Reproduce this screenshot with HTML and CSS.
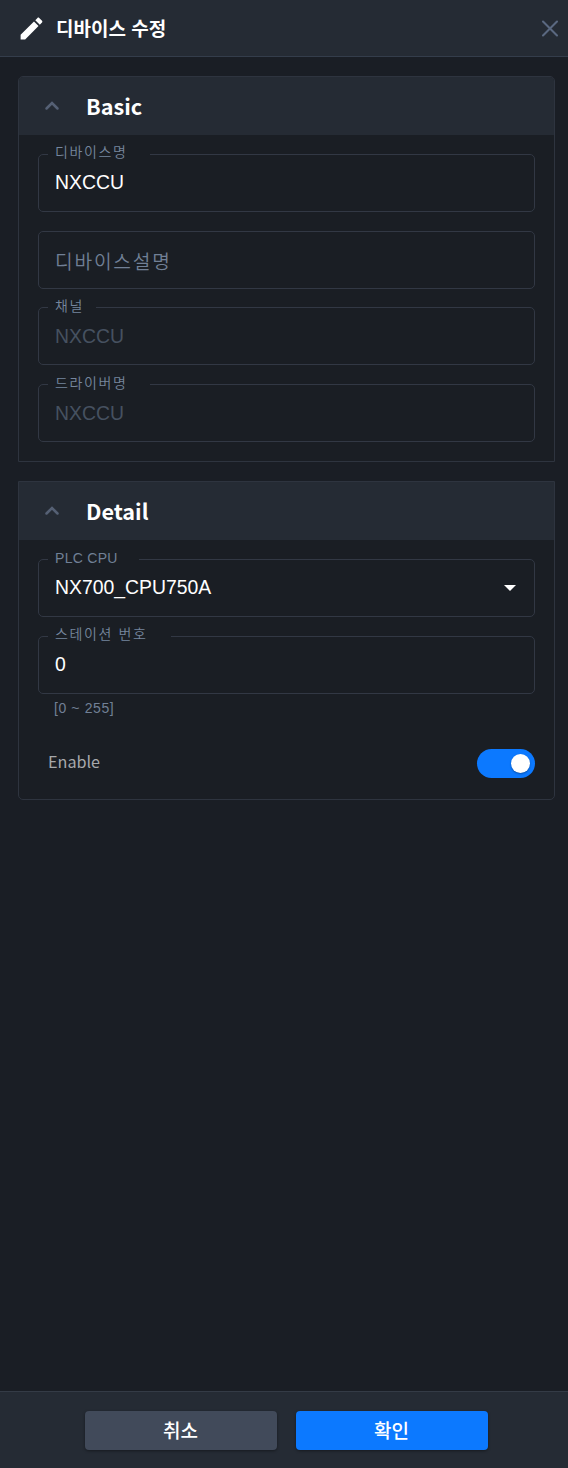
FILE: index.html
```html
<!DOCTYPE html>
<html lang="ko">
<head>
<meta charset="utf-8">
<title>디바이스 수정</title>
<link rel="stylesheet" href="styles.css">
</head>
<body>
<div class="dialog">
  <header class="dialog-header">
    <svg class="pencil" viewBox="0 0 24 24"><path fill="#fff" d="M3 17.25V21h3.75L17.81 9.94l-3.75-3.75L3 17.25zM20.71 7.04c.39-.39.39-1.02 0-1.41l-2.34-2.34c-.39-.39-1.02-.39-1.41 0l-1.83 1.83 3.75 3.75 1.83-1.83z"/></svg>
    <h1 class="title">디바이스 수정</h1>
    <svg class="close" viewBox="0 0 18 18"><path d="M2 2.5l14 14M16 2.5l-14 14"/></svg>
  </header>
  <main class="content">
    <section class="card card-basic">
      <div class="card-header"><svg class="chevron" viewBox="0 0 16 12"><path d="M2.5 8.5L8 3l5.500 5.500"/></svg><h2 class="card-title">Basic</h2></div>
      <div class="card-body">
        <div class="field"><span class="label ko raised notch-m">디바이스명</span><span class="value">NXCCU</span></div>
        <div class="field"><span class="placeholder">디바이스설명</span></div>
        <div class="field tight"><span class="label ko notch-s">채널</span><span class="value disabled">NXCCU</span></div>
        <div class="field"><span class="label ko notch-m">드라이버명</span><span class="value disabled">NXCCU</span></div>
      </div>
    </section>
    <section class="card card-detail">
      <div class="card-header"><svg class="chevron" viewBox="0 0 16 12"><path d="M2.5 8.5L8 3l5.500 5.500"/></svg><h2 class="card-title">Detail</h2></div>
      <div class="card-body">
        <div class="field"><span class="label notch-p">PLC CPU</span><span class="value">NX700_CPU750A</span><svg class="arrow" viewBox="0 0 12 6"><path fill="#fff" d="M0 0h12L6 6z"/></svg></div>
        <div class="field"><span class="label ko raised notch-l">스테이션 번호</span><span class="value">0</span></div>
        <p class="helper">[0 ~ 255]</p>
        <div class="switch-row"><span class="switch-label">Enable</span><span class="switch"><span class="knob"></span></span></div>
      </div>
    </section>
  </main>
  <footer class="dialog-footer">
    <button class="btn cancel">취소</button>
    <button class="btn confirm">확인</button>
  </footer>
</div>
</body>
</html>
```
FILE: styles.css
```css
* { box-sizing: border-box; }
body {
  margin: 0;
  background: #1a1e25;
  color: #fff;
  font-family: "Liberation Sans", "Noto Sans CJK KR", sans-serif;
}
.dialog { height: 1468px; display: flex; flex-direction: column; }
.dialog-header {
  height: 57px;
  flex: none;
  display: flex;
  align-items: center;
  padding: 0 9px 0 17px;
  background: #252b34;
  border-bottom: 1px solid #343d4b;
}
.pencil { width: 29px; height: 29px; }
.title {
  margin: 0 auto 0 10px;
  font: 700 19px/28px "Noto Sans CJK KR", sans-serif;
}
.close { width: 18px; height: 18px; fill: none; stroke: #5a6880; stroke-width: 2.1; stroke-linecap: round; }
.content { flex: 1; padding: 19px 13px 0 18px; }
.card {
  border: 1px solid #2e343f;
  border-radius: 5px 5px 0 0;
  background: #1a1e24;
  overflow: hidden;
}
.card-basic { height: 386px; }
.card-detail { height: 319px; margin-top: 19px; border-radius: 0 0 5px 5px; }
.card-header { height: 58px; display: flex; align-items: center; padding-left: 25px; background: #252b34; }
.chevron { width: 16px; height: 12px; fill: none; stroke: #556074; stroke-width: 2.5; stroke-linecap: round; }
.card-title { margin: 0 0 0 26px; font: 700 21.6px/32px "Noto Sans CJK KR", sans-serif; }
.card-body { padding: 19px; display: flex; flex-direction: column; }
.field {
  position: relative;
  flex: none;
  height: 58px;
  padding: 0 16px;
  display: flex;
  align-items: center;
  border: 1px solid #323844;
  border-radius: 5px;
}
.field + .field { margin-top: 19px; }
.field + .tight { margin-top: 18px; }
.label {
  position: absolute;
  left: 9px;
  top: -12px;
  padding-left: 7px;
  height: 20px;
  font-size: 14px;
  line-height: 20px;
  letter-spacing: .3px;
  white-space: nowrap;
  color: #718096;
  background: #1a1e24;
}
.ko { top: -13px; font-family: "Noto Sans CJK KR", sans-serif; font-weight: 350; letter-spacing: 1.6px; color: #76869d; }
.raised { top: -14px; }
.notch-s { width: 48px; }
.notch-p { width: 91px; }
.notch-m { width: 102px; }
.notch-l { width: 123px; }
.value { margin-bottom: 2px; font-size: 19.4px; line-height: 24px; }
.disabled { margin-bottom: 0; color: #465160; }
.placeholder {
  margin-top: 2px;
  color: #718096;
  font: 350 19.2px/28px "Noto Sans CJK KR", sans-serif;
  letter-spacing: 1.8px;
}
.arrow { width: 12px; height: 6px; margin-left: auto; margin-right: 2px; }
.helper { margin: 4px 0 0 16px; font-size: 14px; line-height: 20px; letter-spacing: .6px; color: #718096; }
.switch-row { margin-top: 31px; height: 29px; display: flex; align-items: center; justify-content: space-between; padding-left: 10px; }
.switch-label { margin-bottom: 5px; font: 400 16.2px/26px "Noto Sans CJK KR", sans-serif; color: #a6a8ab; }
.switch { width: 58px; height: 29px; padding: 5px; border-radius: 15px; background: #0c79ff; display: flex; justify-content: flex-end; }
.knob { width: 19px; height: 19px; border-radius: 50%; background: #fff; box-shadow: 0 1px 2px #0005; }
.dialog-footer {
  height: 77px;
  flex: none;
  display: flex;
  gap: 19px;
  padding: 19px 0 0 85px;
  background: #252b34;
  border-top: 1px solid #343b46;
}
.btn {
  width: 192px;
  height: 39px;
  padding: 0 1px 2px 0;
  border: 0;
  border-radius: 4px;
  color: #fff;
  font: 500 19px/36px "Noto Sans CJK KR", sans-serif;
  box-shadow: 0 1px 3px #0006;
}
.cancel { background: #414a5a; }
.confirm { background: #0c79ff; }
```
